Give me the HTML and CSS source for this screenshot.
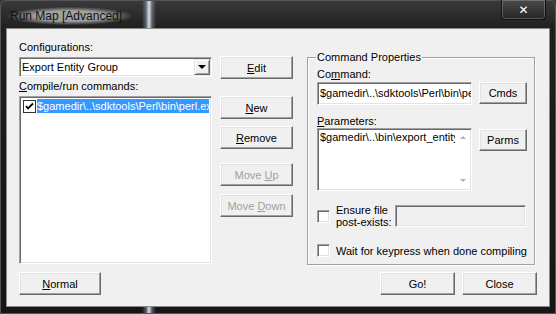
FILE: index.html
```html
<!DOCTYPE html>
<html lang="en">
<head>
  <meta charset="UTF-8" />
  <title>Run Map [Advanced]</title>
  <link rel="stylesheet" href="styles.css">
</head>
<body>
  <div class="window">
    <div class="titlebar">
      <div class="title">Run Map [Advanced]</div>
      <div class="close-btn">&#x2715;</div>
    </div>

    <div class="client">
      <div class="top">
        <div class="left">
          <div class="label">Configurations:</div>
          <div class="combo">
            <span class="combo-text">Export Entity Group</span>
            <span class="combo-btn"><span class="arrow-down"></span></span>
          </div>
          <div class="label label-gap"><u>C</u>ompile/run commands:</div>
          <div class="listbox">
            <div class="list-row">
              <span class="check checked">
                <svg width="9" height="9" viewBox="0 0 9 9"><path d="M1 4 L3 6.5 L8 1.5" fill="none" stroke="#000" stroke-width="1.8"/></svg>
              </span>
              <span class="list-text">$gamedir\..\sdktools\Perl\bin\perl.exe</span>
            </div>
          </div>
        </div>

        <div class="mid">
          <button class="btn btn-edit"><u>E</u>dit</button>
          <button class="btn btn-new"><u>N</u>ew</button>
          <button class="btn btn-remove"><u>R</u>emove</button>
          <button class="btn btn-up" disabled>Move <u>U</u>p</button>
          <button class="btn btn-down" disabled>Move <u>D</u>own</button>
        </div>

        <fieldset class="group">
          <legend>Command Properties</legend>
          <div class="label">Co<u>m</u>mand:</div>
          <div class="row">
            <div class="edit cmd-edit">$gamedir\..\sdktools\Perl\bin\perl.exe</div>
            <button class="btn btn-small">Cmds</button>
          </div>
          <div class="label params-label"><u>P</u>arameters:</div>
          <div class="row">
            <div class="edit params-edit">
              <span class="params-text">$gamedir\..\bin\export_entity.pl</span>
              <span class="vscroll">
                <span class="sarrow up"></span>
                <span class="sarrow down"></span>
              </span>
            </div>
            <button class="btn btn-small btn-parms">Parms</button>
          </div>
          <div class="row ensure-row">
            <span class="check"></span>
            <span class="check-label">Ensure file<br>post-exists:</span>
            <div class="edit disabled-edit"></div>
          </div>
          <div class="row wait-row">
            <span class="check"></span>
            <span class="check-label">Wait for keypress when done compiling</span>
          </div>
        </fieldset>
      </div>

      <div class="bottom">
        <button class="btn btn-wide"><u>N</u>ormal</button>
        <div class="bottom-right">
          <button class="btn btn-wide">Go!</button>
          <button class="btn btn-wide">Close</button>
        </div>
      </div>
    </div>
  </div>
</body>
</html>
```

FILE: styles.css
```css
body {
  margin: 0;
  width: 556px;
  height: 314px;
  overflow: hidden;
  font-family: "Liberation Sans", Arial, sans-serif;
  font-size: 11px;
  color: #000;
  background:
    linear-gradient(90deg, transparent 142px, rgba(190, 210, 235, 0.35) 146px, rgba(235, 245, 255, 0.9) 149px, rgba(190, 210, 235, 0.35) 152px, transparent 156px),
    linear-gradient(180deg, #3a3a3a 0, #1e1e1e 30px, #161616 100%);
}
.window {
  display: flex;
  flex-direction: column;
  height: 314px;
  border: 1px solid #555;
  border-radius: 6px 6px 0 0;
  box-sizing: border-box;
}
.titlebar {
  height: 28px;
  display: flex;
  justify-content: space-between;
  align-items: flex-start;
}
.title {
  margin: 6px 0 0 7px;
  padding: 2px 10px 2px 2px;
  font-size: 12px;
  line-height: 14px;
  color: #101010;
  background: radial-gradient(ellipse at center, rgba(200, 200, 200, 0.75) 40%, rgba(160, 160, 160, 0) 72%);
}
.close-btn {
  width: 43px;
  height: 19px;
  margin: -1px 9px 0 0;
  border: 1px solid #111;
  border-top: 0;
  border-radius: 0 0 4px 4px;
  box-shadow: inset 0 0 0 1px rgba(255, 255, 255, 0.22);
  background: linear-gradient(180deg, #4a4a4a, #262626);
  color: #fff;
  font-family: "DejaVu Sans", sans-serif;
  font-size: 12px;
  font-weight: bold;
  display: flex;
  align-items: center;
  justify-content: center;
}
.client {
  margin: 0 6px;
  height: 277px;
  background: #f0f0f0;
  box-shadow: 0 0 0 1px #8a8a8a;
  padding: 12px 12px 0;
  box-sizing: border-box;
}
.top {
  display: flex;
  height: 223px;
}
.left {
  width: 193px;
}
.label {
  line-height: 13px;
  height: 13px;
  white-space: nowrap;
}
.label-gap {
  margin-top: 3px;
}
.combo {
  margin-top: 3px;
  height: 20px;
  display: flex;
  align-items: center;
  background: #fff;
  border: 1px solid;
  border-color: #a0a0a0 #fff #fff #a0a0a0;
  box-shadow: inset 1px 1px #696969, inset -1px -1px #e3e3e3;
  box-sizing: border-box;
}
.combo-text {
  flex: 1;
  padding-left: 2px;
}
.combo-btn {
  width: 16px;
  height: 16px;
  margin-right: 1px;
  background: #f0f0f0;
  border: 1px solid;
  border-color: #e3e3e3 #696969 #696969 #e3e3e3;
  box-shadow: inset 1px 1px #fff, inset -1px -1px #a0a0a0;
  box-sizing: border-box;
  display: flex;
  align-items: center;
  justify-content: center;
}
.arrow-down {
  width: 0;
  height: 0;
  border-left: 4px solid transparent;
  border-right: 4px solid transparent;
  border-top: 4px solid #000;
}
.listbox {
  margin-top: 3px;
  height: 168px;
  background: #fff;
  border: 1px solid;
  border-color: #a0a0a0 #fff #fff #a0a0a0;
  box-shadow: inset 1px 1px #696969, inset -1px -1px #e3e3e3;
  box-sizing: border-box;
  padding: 2px 2px 0 2px;
  overflow: hidden;
}
.list-row {
  display: flex;
  align-items: center;
  height: 14px;
}
.check {
  width: 13px;
  height: 13px;
  flex: none;
  background: #fff;
  border: 1px solid;
  border-color: #a0a0a0 #fff #fff #a0a0a0;
  box-shadow: inset 1px 1px #696969, inset -1px -1px #e3e3e3;
  box-sizing: border-box;
  display: flex;
  align-items: center;
  justify-content: center;
}
.list-row .check {
  border: 1px solid #333;
  box-shadow: none;
  margin-left: 1px;
}
.list-text {
  flex: 1;
  margin-left: 1px;
  background: #3399ff;
  color: #fff;
  line-height: 14px;
  white-space: nowrap;
  overflow: hidden;
}
.mid {
  width: 73px;
  margin-left: 8px;
  display: flex;
  flex-direction: column;
}
.btn {
  font-family: "Liberation Sans", Arial, sans-serif;
  font-size: 11px;
  color: #000;
  height: 23px;
  padding: 0;
  background: #f0f0f0;
  border: 1px solid;
  border-color: #fff #696969 #696969 #fff;
  box-shadow: inset -1px -1px #a0a0a0, inset 1px 1px #e3e3e3;
  border-radius: 0;
}
.btn:disabled {
  color: #a0a0a0;
}
.btn-edit {
  margin-top: 15px;
}
.btn-new {
  margin-top: 17px;
}
.btn-remove {
  margin-top: 7px;
}
.btn-up {
  margin-top: 14px;
}
.btn-down {
  margin-top: 8px;
}
.group {
  width: 228px;
  height: 214px;
  margin: 10px 0 0 14px;
  padding: 0 7px 0 9px;
  box-sizing: border-box;
  border: 1px solid #a0a0a0;
  box-shadow: inset 1px 1px #fff, 1px 1px #fff;
  min-width: 0;
}
.group legend {
  padding: 0 1px;
  margin-left: -1px;
  line-height: 13px;
}
.group > .label:first-of-type {
  margin-top: 4px;
}
.row {
  display: flex;
  align-items: flex-start;
}
.edit {
  background: #fff;
  border: 1px solid;
  border-color: #a0a0a0 #fff #fff #a0a0a0;
  box-shadow: inset 1px 1px #696969, inset -1px -1px #e3e3e3;
  box-sizing: border-box;
}
.cmd-edit {
  width: 155px;
  height: 23px;
  margin-top: 1px;
  padding: 4px 0 0 2px;
  white-space: nowrap;
  overflow: hidden;
}
.btn-small {
  width: 48px;
  height: 22px;
  margin: 1px 0 0 7px;
}
.params-label {
  margin-top: 10px;
}
.params-edit {
  width: 155px;
  height: 63px;
  margin-top: 0;
  display: flex;
}
.params-text {
  flex: 1;
  padding: 2px 0 0 2px;
  white-space: nowrap;
  overflow: hidden;
}
.vscroll {
  width: 16px;
  display: flex;
  flex-direction: column;
  justify-content: space-between;
  align-items: center;
  padding: 7px 0 8px;
}
.sarrow {
  width: 0;
  height: 0;
  border-left: 3px solid transparent;
  border-right: 3px solid transparent;
}
.sarrow.up {
  border-bottom: 3px solid #b0b0b0;
}
.sarrow.down {
  border-top: 3px solid #b0b0b0;
}
.btn-parms {
  margin-top: 1px;
}
.ensure-row {
  margin-top: 13px;
  align-items: center;
}
.check-label {
  margin-left: 6px;
  line-height: 12px;
  white-space: nowrap;
}
.disabled-edit {
  width: 131px;
  height: 22px;
  margin-left: auto;
  margin-right: 1px;
  background: #f0f0f0;
}
.wait-row {
  margin-top: 16px;
  align-items: center;
}
.bottom {
  margin-top: 8px;
  display: flex;
  justify-content: space-between;
}
.btn-wide {
  width: 82px;
}
.bottom-right {
  display: flex;
  gap: 7px;
}
.bottom-right .btn-wide {
  width: 75px;
}
```
